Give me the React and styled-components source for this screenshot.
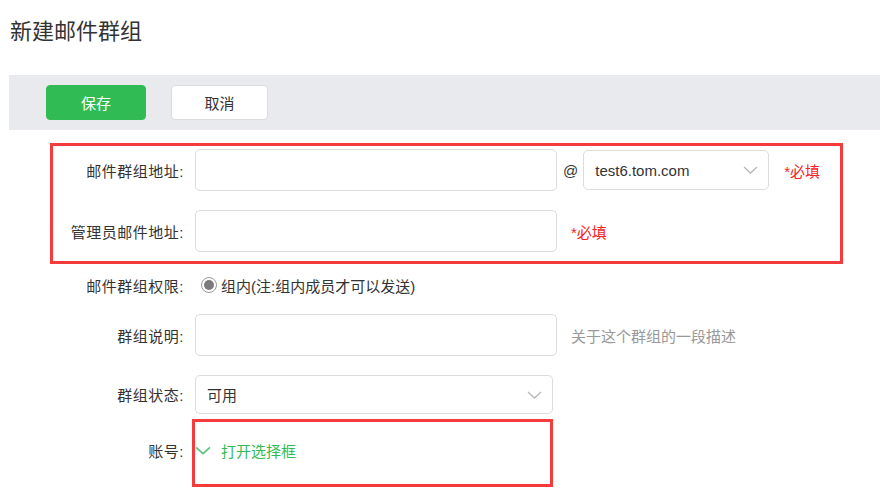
import React from 'react';
import styled, { createGlobalStyle } from 'styled-components';

const GlobalStyle = createGlobalStyle`
  html, body {
    margin: 0;
    padding: 0;
    background: #fff;
  }
  body {
    font-family: "Liberation Sans", "Noto Sans CJK SC", sans-serif;
    color: #333;
    font-size: 15px;
  }
`;

const Page = styled.div`
  position: relative;
  width: 880px;
  height: 504px;
  overflow: hidden;
`;

const Title = styled.h1`
  margin: 0;
  padding: 17px 0 0 10px;
  height: 75px;
  box-sizing: border-box;
  font-size: 22px;
  font-weight: normal;
  line-height: 30px;
  color: #333;
`;

const Toolbar = styled.div`
  margin-left: 9px;
  height: 55px;
  background: #e8eaee;
  display: flex;
  align-items: center;
  gap: 25px;
  padding-left: 37px;
`;

const Button = styled.button`
  height: 35px;
  width: ${p => p.$w}px;
  border-radius: 4px;
  font-family: inherit;
  font-size: 15px;
  cursor: pointer;
  background: ${p => (p.$primary ? '#31bb55' : '#fff')};
  color: ${p => (p.$primary ? '#fff' : '#333')};
  border: 1px solid ${p => (p.$primary ? '#31bb55' : '#dcdcdc')};
`;

const Form = styled.div`
  display: flex;
  flex-direction: column;
  padding-top: 19px;
`;

const Row = styled.div`
  display: flex;
  align-items: center;
  height: ${p => p.$h}px;
  margin-bottom: ${p => p.$mb ?? 19}px;
`;

const Label = styled.label`
  width: 184px;
  text-align: right;
  padding-right: 11px;
  flex-shrink: 0;
  color: #333;
  font-size: 15px;
  letter-spacing: 0.5px;
`;

const Input = styled.input`
  box-sizing: border-box;
  width: ${p => p.$w || 362}px;
  height: 42px;
  border: 1px solid #dcdcdc;
  border-radius: 5px;
  outline: none;
  padding: 0 11px;
  font-family: inherit;
  font-size: 15px;
`;

const At = styled.span`
  margin: 0 5px 0 6px;
  font-size: 15px;
  color: #333;
`;

const Select = styled.div`
  box-sizing: border-box;
  width: ${p => p.$w}px;
  height: ${p => p.$h}px;
  border: 1px solid #dcdcdc;
  border-radius: 5px;
  display: flex;
  align-items: center;
  justify-content: space-between;
  padding: 0 10px 0 11px;
  font-size: 15px;
  color: #333;
`;

const Required = styled.span`
  margin-left: ${p => p.$ml}px;
  color: #f52222;
  font-size: 15px;
`;

const Hint = styled.span`
  margin-left: 14px;
  color: #999;
  font-size: 15px;
`;

const RadioGroup = styled.div`
  display: flex;
  align-items: center;
  gap: 4px;
  padding-left: 6px;
  font-size: 15px;
`;

const RadioDot = styled.span`
  width: 16px;
  height: 16px;
  box-sizing: border-box;
  border-radius: 50%;
  border: 1px solid #9a9a9a;
  display: flex;
  align-items: center;
  justify-content: center;
  &::after {
    content: '';
    width: 10px;
    height: 10px;
    border-radius: 50%;
    background: #7b7b7b;
  }
`;

const PickerLink = styled.span`
  display: flex;
  align-items: center;
  gap: 10px;
  color: #31bb55;
  font-size: 15px;
`;

const Annotation = styled.div`
  position: absolute;
  left: ${p => p.$x}px;
  top: ${p => p.$y}px;
  width: ${p => p.$w}px;
  height: ${p => p.$h}px;
  box-sizing: border-box;
  border: 3px solid #f53b3b;
  pointer-events: none;
`;

function Chevron({ color = '#b8b8b8', width = 15, height = 8, stroke = 1.3 }) {
  return (
    <svg width={width} height={height} viewBox="0 0 15 8">
      <polyline points="1,1 7.5,7 14,1" fill="none" stroke={color} strokeWidth={stroke} />
    </svg>
  );
}

export default function App() {
  return (
    <Page>
      <GlobalStyle />
      <Title>新建邮件群组</Title>
      <Toolbar>
        <Button $primary $w={100}>保存</Button>
        <Button $w={97}>取消</Button>
      </Toolbar>
      <Form>
        <Row $h={42}>
          <Label>邮件群组地址:</Label>
          <Input />
          <At>@</At>
          <Select $w={186} $h={40}>
            test6.tom.com
            <Chevron />
          </Select>
          <Required $ml={15}>*必填</Required>
        </Row>
        <Row $h={42}>
          <Label>管理员邮件地址:</Label>
          <Input />
          <Required $ml={14}>*必填</Required>
        </Row>
        <Row $h={28} $mb={15}>
          <Label>邮件群组权限:</Label>
          <RadioGroup>
            <RadioDot />
            <span>组内(注:组内成员才可以发送)</span>
          </RadioGroup>
        </Row>
        <Row $h={42}>
          <Label>群组说明:</Label>
          <Input />
          <Hint>关于这个群组的一段描述</Hint>
        </Row>
        <Row $h={39}>
          <Label>群组状态:</Label>
          <Select $w={358} $h={39}>
            可用
            <Chevron />
          </Select>
        </Row>
        <Row $h={34}>
          <Label>账号:</Label>
          <PickerLink>
            <Chevron color="#5cc47c" width={16} height={9} stroke={1.6} />
            打开选择框
          </PickerLink>
        </Row>
      </Form>
      <Annotation $x={50} $y={143} $w={793} $h={121} />
      <Annotation $x={192} $y={419} $w={361} $h={68} />
    </Page>
  );
}
